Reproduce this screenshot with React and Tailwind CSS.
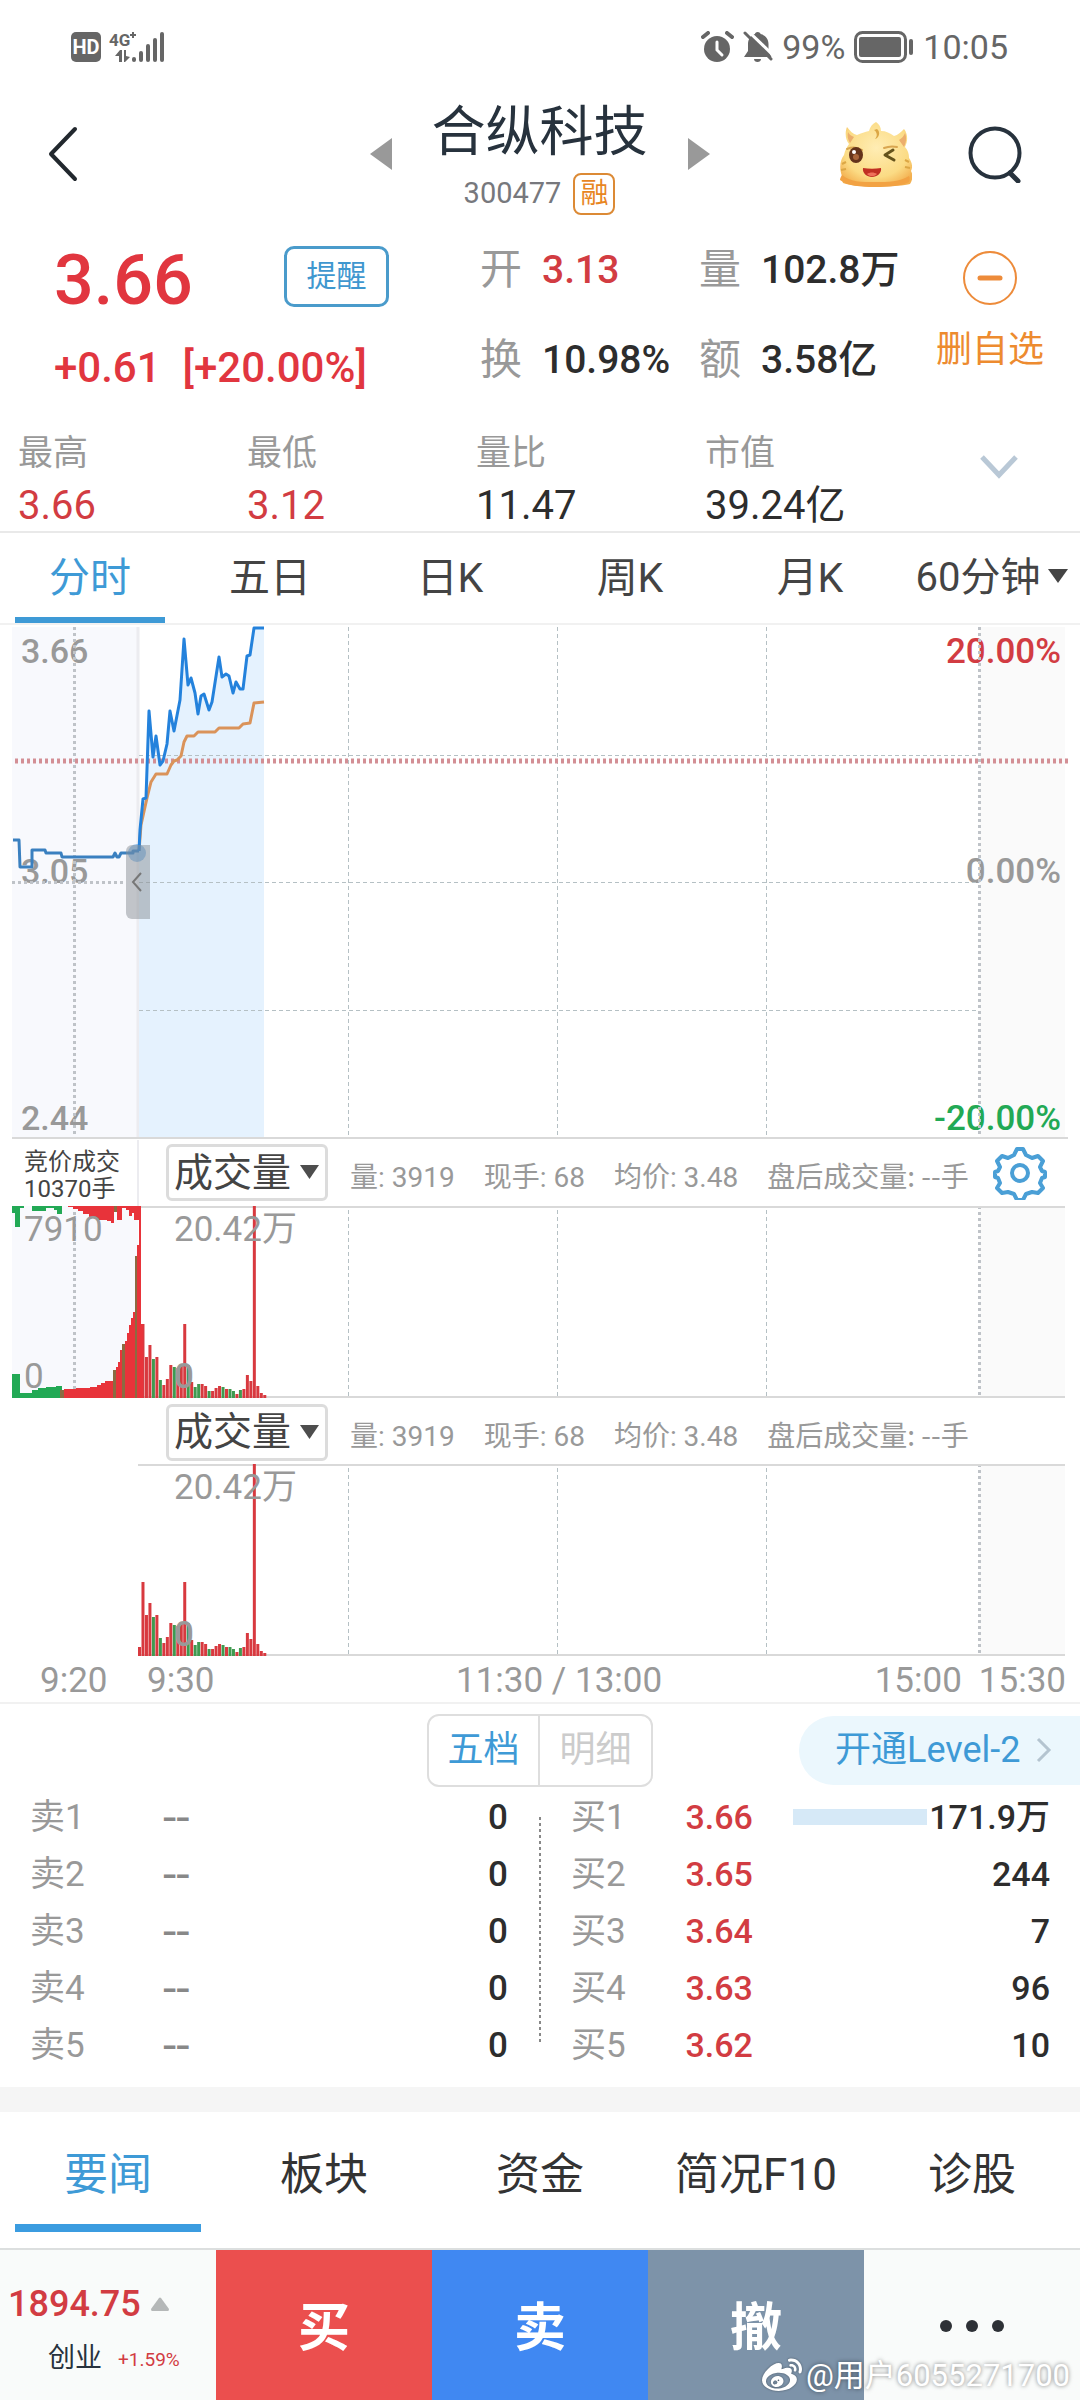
import { useState } from 'react';
import { FaWeibo } from 'react-icons/fa';

const STATS = [
  { label: '最高', value: '3.66', color: 'text-[#d23c42]' },
  { label: '最低', value: '3.12', color: 'text-[#d23c42]' },
  { label: '量比', value: '11.47', color: 'text-[#2d2d2d]' },
  { label: '市值', value: '39.24亿', color: 'text-[#2d2d2d]' },
];

const PERIODS = ['分时', '五日', '日K', '周K', '月K'];
const NEWS_TABS = ['要闻', '板块', '资金', '简况F10', '诊股'];

const VOLUME_INFO = ['量: 3919', '现手: 68', '均价: 3.48'];

const ORDERS = [
  { level: 1, bid: '3.66', amount: '171.9万', bar: true },
  { level: 2, bid: '3.65', amount: '244' },
  { level: 3, bid: '3.64', amount: '7' },
  { level: 4, bid: '3.63', amount: '96' },
  { level: 5, bid: '3.62', amount: '10' },
];

const AUCTION_LINE =
  '13,215 19,215 20,242 32,242 32,225 45,225 46,228 61,228 62,232 113,232 115,228 117,232 119,232 121,228 133,228 133,226 139,226';
const PRICE_LINE =
  '139,226 140,205 143,174 146,173 149,86 153,132 156,111 160,140 163,136 167,119 170,86 174,106 180,75 184,14 188,60 191,53 195,68 198,89 201,71 204,69 209,85 212,77 219,32 222,52 226,49 229,51 233,68 236,57 240,64 243,64 247,31 250,30 254,3 264,3';
const AVG_LINE =
  '139,226 141,200 147,173 151,157 156,149 167,149 171,140 174,136 177,135 181,131 184,117 187,111 194,111 198,107 215,107 219,103 239,103 243,99 250,98 254,78 264,77';

// one bar per minute since 9:30
const VOLUMES = [9, 74, 41, 53, 39, 41, 18, 13, 19, 33, 31, 30, 33, 74, 33, 16, 11, 14, 14, 12, 7, 7, 10, 12, 11, 9, 9, 7, 4, 8, 9, 23, 17, 192, 12, 5, 3];
const DOWN_MINUTES = [4, 6, 10, 14, 16, 17, 20, 24, 26, 27, 29];

// [x, width, height, color] for the call auction, matched volume from the bottom
const RED = '#e8333a';
const GREEN = '#22a955';
const OLIVE = '#8b6b41';
const AUCTION_BARS = [
  [12, 8, 24, GREEN], [20, 12, 5, GREEN], [32, 6, 8, GREEN], [38, 8, 10, GREEN], [46, 10, 11, GREEN], [56, 6, 12, GREEN],
  [60, 4, 8, OLIVE], [64, 12, 9, RED], [76, 14, 10, RED], [90, 7, 11, RED], [97, 4, 13, RED], [101, 4, 15, RED], [105, 8, 17, RED],
  [113, 3, 28, OLIVE], [116, 2, 31, RED], [118, 2, 36, RED], [120, 2, 48, RED], [122, 3, 54, OLIVE], [125, 2, 57, RED],
  [127, 2, 65, RED], [129, 2, 73, RED], [131, 2, 80, RED], [133, 2, 86, RED], [135, 2, 142, OLIVE], [137, 2, 153, RED], [139, 2, 192, RED],
  [141, 2, 74, RED],
];
// unmatched volume, hanging from the top
const UNMATCHED_BARS = [
  [12, 3, 7, GREEN], [15, 5, 21, GREEN], [20, 4, 2, GREEN], [32, 14, 5, GREEN], [46, 8, 2, GREEN], [54, 3, 4, GREEN], [57, 5, 8, GREEN],
  [68, 5, 1, RED], [73, 5, 3, RED], [78, 5, 5, RED], [83, 6, 8, RED], [89, 8, 11, RED], [97, 10, 14, RED], [107, 4, 15, RED], [111, 3, 17, RED],
  [114, 3, 6, OLIVE], [117, 5, 14, RED], [122, 4, 2, RED], [126, 3, 4, RED], [129, 3, 10, RED], [132, 2, 7, RED], [134, 6, 14, RED],
];

const StatusBar = () => (
  <div className="flex items-center justify-between pt-[31px] pb-[31px] pl-[71px] pr-[72px] text-[#666]">
    <div className="flex items-center gap-2">
      <span className="bg-[#666] text-white text-[20px] leading-[30px] font-bold rounded-[5px] w-[30px] text-center">HD</span>
      <div className="flex h-8 items-start">
        <div className="flex flex-col">
          <span className="text-[17px] leading-[18px] font-bold">4G</span>
          <svg className="ml-[6px]" width="16" height="14" viewBox="0 0 16 14" fill="#666">
            <path d="M0 7l5-6h2v12H4V7zM9 1h2v6l4 1-5 5H9z" />
          </svg>
        </div>
        <svg className="-ml-px" width="37" height="32" viewBox="0 0 37 32" fill="#666">
          <path d="M2 1h2v2h2v2H4v2H2V5H0V3h2z" />
          <rect x="2" y="26" width="4" height="5" rx="2" />
          <rect x="9" y="20" width="4" height="11" rx="2" />
          <rect x="16" y="13" width="4" height="18" rx="2" />
          <rect x="23" y="7" width="4" height="24" rx="2" />
          <rect x="30" y="1" width="4" height="30" rx="2" />
        </svg>
      </div>
    </div>
    <div className="flex items-center gap-[9px]">
      <svg width="33" height="32" viewBox="0 0 33 32">
        <circle cx="16" cy="18" r="13" fill="#666" />
        <path d="M2 6l5-4M31 6l-5-4" stroke="#666" strokeWidth="4" strokeLinecap="round" />
        <path d="M16 11v8l5 5" stroke="#fff" strokeWidth="3" fill="none" strokeLinecap="round" />
      </svg>
      <svg width="30" height="32" viewBox="0 0 30 32" fill="#666">
        <path d="M14.500 1c2 0 3 1 3 2 5 1 8 5 8 10v7l3 6H1l4-6v-7c0-5 3-9 7-10 0-1 1-2 2.500-2zM11 28h7c0 2-1.500 3-3.500 3S11 30 11 28z" />
        <path d="M3 -2l29 28" stroke="#fff" strokeWidth="3" />
        <path d="M2 2l26 26" stroke="#666" strokeWidth="3" strokeLinecap="round" />
      </svg>
      <span className="text-[34px] leading-[30px]">99%</span>
      <svg width="60" height="32" viewBox="0 0 60 32">
        <rect x="1.500" y="1.500" width="50" height="29" rx="7" fill="none" stroke="#666" strokeWidth="3" />
        <rect x="5" y="6" width="42" height="20" rx="2" fill="#666" />
        <rect x="55" y="8" width="4" height="16" rx="2" fill="#666" />
      </svg>
      <span className="text-[34px] leading-[30px]">10:05</span>
    </div>
  </div>
);

const Mascot = () => (
  <svg width="74" height="68" viewBox="0 0 74 68">
    <defs>
      <radialGradient id="face" cx="50%" cy="40%" r="65%">
        <stop offset="0%" stopColor="#ffedb4" />
        <stop offset="70%" stopColor="#fbdb84" />
        <stop offset="100%" stopColor="#f3b050" />
      </radialGradient>
    </defs>
    <path d="M4 56c-3-8-2-16 2-21 1-5 3-8 5-11-4-5-4-12-2-17 3 4 6 7 10 8 4-2 8-3 12-4 1-4 3-7 7-9 3 2 5 5 5 9 5 0 9 2 13 5 4-1 7-4 10-7 4 5 4 12 1 18 3 3 4 7 4 11 3 4 4 9 2 13 2 4 2 8-1 13-9 3-57 4-67-1-1-2-1-5-1-7z" fill="url(#face)" />
    <path d="M2 60c8 6 20 7 35 7s27-1 34-5c1-2 1-4 0-6-10 6-20 6-34 6S12 62 4 55c-1 2-2 3-2 5z" fill="#f2a243" />
    <path d="M67 13c2 5 1 10-1 14l-5-7c3-2 5-4 6-7zM10 12c-1 4 0 8 2 11l4-6c-3-1-5-3-6-5z" fill="#ecae6c" />
    <path d="M36 10c3 2 4 6 1 9 4-1 6-7 2-10z" fill="#dca745" />
    <path d="M9 29c5-2 10-2 15 1M46 28c5-2 9-2 13-1" stroke="#d9a650" strokeWidth="2" fill="none" strokeLinecap="round" />
    <path d="M4 44l4-2M3 50l5-1M71 42l-4-2M72 48l-5-1" stroke="#dca745" strokeWidth="2" />
    <ellipse cx="18" cy="35" rx="7" ry="8" fill="#64331b" />
    <circle cx="18" cy="37" r="3" fill="#a8643a" />
    <circle cx="16" cy="32" r="2" fill="#fff" />
    <path d="M55 30l-8 5 9 5" stroke="#64521b" strokeWidth="3" fill="none" strokeLinecap="round" strokeLinejoin="round" />
    <path d="M25 48c6 1 12 1 18 0 1 5-4 9-9 9s-10-4-9-9z" fill="#c03022" />
    <path d="M29 54c3-2 7-2 10 0-3 3-7 3-10 0z" fill="#f0705a" />
  </svg>
);

const Header = () => (
  <header className="grid grid-cols-[1fr_auto_1fr] items-center pt-[6px] pb-2 pl-12 pr-[58px]">
    <button aria-label="返回" className="justify-self-start pb-2">
      <svg width="30" height="56" viewBox="0 0 30 56" fill="none" stroke="#22282e" strokeWidth="4" strokeLinecap="round" strokeLinejoin="round">
        <path d="M27 3L3 28l24 25" />
      </svg>
    </button>
    <div className="flex items-center gap-10 pl-[9px]">
      <button aria-label="上一只" className="pb-2">
        <svg width="22" height="32" viewBox="0 0 22 32" fill="#999"><path d="M22 0v32L0 16z" /></svg>
      </button>
      <div className="flex flex-col items-center">
        <h1 className="text-[54px] leading-[66px] text-[#27323d]">合纵科技</h1>
        <div className="mt-[6px] flex items-center gap-3">
          <span className="text-[29px] text-[#77787d]">300477</span>
          <span className="h-[42px] w-[42px] rounded-lg border-2 border-[#dc8a35] text-center text-[28px] leading-[38px] text-[#e8861f]">融</span>
        </div>
      </div>
      <button aria-label="下一只" className="pb-2">
        <svg width="22" height="32" viewBox="0 0 22 32" fill="#999"><path d="M0 0v32l22-16z" /></svg>
      </button>
    </div>
    <div className="flex items-center gap-14 justify-self-end pb-2">
      <button aria-label="助手"><Mascot /></button>
      <button aria-label="搜索">
        <svg width="54" height="58" viewBox="0 0 54 58" fill="none" stroke="#27323d" strokeWidth="4" strokeLinecap="round">
          <circle cx="27" cy="28" r="24.500" />
          <path d="M42 48l8 8" strokeWidth="5" />
        </svg>
      </button>
    </div>
  </header>
);

const Pair = ({ label, value, color = 'text-[#2d2d2d]' }) => (
  <div className="flex items-center gap-5 whitespace-nowrap leading-[60px]">
    <dt className="text-[42px] text-[#999]">{label}</dt>
    <dd className={`text-[39px] font-medium ${color}`}>{value}</dd>
  </div>
);

const Quote = () => (
  <section className="border-b-2 border-[#e9e9e9] pb-px">
    <div className="grid grid-cols-[480fr_219fr_201fr_180fr] pt-4">
      <div className="pl-[54px] text-[#e1363f]">
        <div className="flex items-start">
          <span className="w-[230px] text-[70px] leading-[80px] font-medium">3.66</span>
          <button className="mt-[6px] h-[61px] w-[105px] rounded-[10px] border-[3px] border-[#4a9bcb] text-[30px] leading-none text-[#3f97cf]">提醒</button>
        </div>
        <div className="mt-6 flex gap-[22px] text-[42px] leading-[48px] font-medium">
          <span>+0.61</span>
          <span>[+20.00%]</span>
        </div>
      </div>
      <dl className="flex flex-col gap-[30px]">
        <Pair label="开" value="3.13" color="text-[#d23c42]" />
        <Pair label="换" value="10.98%" />
      </dl>
      <dl className="flex flex-col gap-[30px]">
        <Pair label="量" value="102.8万" />
        <Pair label="额" value="3.58亿" />
      </dl>
      <button className="flex flex-col items-center pt-[10px]">
        <svg width="56" height="56" viewBox="0 0 56 56" fill="none" stroke="#ed8b3a">
          <circle cx="28" cy="28" r="26" strokeWidth="2" />
          <path d="M18 28h20" strokeWidth="5" strokeLinecap="round" />
        </svg>
        <span className="mt-6 text-[36px] leading-[40px] text-[#ed8b2f]">删自选</span>
      </button>
    </div>
    <div className="mt-[42px] grid grid-cols-[917fr_163fr]">
      <dl className="grid grid-cols-[229fr_229fr_229fr_212fr] pl-[18px]">
        {STATS.map((s) => (
          <div key={s.label}>
            <dt className="text-[35px] leading-[40px] text-[#999]">{s.label}</dt>
            <dd className={`mt-2 text-[40px] leading-[48px] whitespace-nowrap ${s.color}`}>{s.value}</dd>
          </div>
        ))}
      </dl>
      <button aria-label="展开" className="flex justify-center pt-5">
        <svg width="40" height="26" viewBox="0 0 40 26" fill="none" stroke="#b9c8d6" strokeWidth="5">
          <path d="M3 3l17 18L37 3" />
        </svg>
      </button>
    </div>
  </section>
);

const PeriodTabs = () => {
  const [active, setActive] = useState('分时');
  return (
    <nav className="grid grid-cols-6 border-b-2 border-[#f1f1f1] text-[41px] leading-[56px] text-[#444]">
      {PERIODS.map((p) => (
        <button key={p} onClick={() => setActive(p)} className={`flex flex-col items-center pt-[17px] ${p === active ? 'text-[#3e9ad6]' : ''}`}>
          {p}
          <span className={`mt-[11px] h-[6px] w-[150px] ${p === active ? 'bg-[#3e9ad6]' : ''}`} />
        </button>
      ))}
      <div className="relative flex justify-center pt-[17px]">
        <select aria-label="分钟周期" className="h-[56px] appearance-none bg-transparent pr-6 text-[40px]">
          <option>60分钟</option>
        </select>
        <svg className="pointer-events-none absolute right-3 top-9" width="20" height="14" viewBox="0 0 20 14" fill="#444"><path d="M0 0h20L10 14z" /></svg>
      </div>
    </nav>
  );
};

const PriceChart = () => (
  <svg className="block h-auto w-full" viewBox="0 0 1080 515" fontSize="34" fill="none">
    <rect x="12" y="2" width="125" height="511" fill="#f8f9fd" />
    <rect x="980" y="2" width="85" height="511" fill="#fafafa" />
    <path d="M138 2v511" stroke="#ececf0" strokeWidth="3" />
    <polygon points={`${PRICE_LINE} 264,513 139,513`} fill="#e5f2fe" />

    <g fill="#999" fontWeight="500">
      <text x="21" y="38">3.66</text>
      <text x="21" y="258">3.05</text>
      <text x="21" y="505">2.44</text>
    </g>
    <g fontSize="35" fontWeight="500" textAnchor="end">
      <text x="1061" y="38" fill="#d23c42">20.00%</text>
      <text x="1061" y="258" fill="#999">0.00%</text>
      <text x="1061" y="505" fill="#22a955">-20.00%</text>
    </g>

    <g stroke="#b5c0c4" strokeDasharray="4 3">
      <path d="M348.500 2v511M557.500 2v511M766.500 2v511" />
      <path d="M139 130.500h840M139 257.500h840M139 385.500h840" />
    </g>
    <path d="M74.500 2v511M979.500 2v511M12 257.500h114" stroke="#bfc3c8" strokeWidth="3" strokeDasharray="3 3" />
    <path d="M15 136h1053" stroke="#d38f95" strokeWidth="5" strokeDasharray="3 3" />
    <path d="M12 513h1056" stroke="#d9d9d9" strokeWidth="2" />

    <g strokeWidth="3" strokeLinejoin="round">
      <polyline points={AVG_LINE} stroke="#da935a" />
      <polyline points={AUCTION_LINE} stroke="#3a80c0" />
      <polyline points={PRICE_LINE} stroke="#2482dc" />
    </g>
    <circle cx="137" cy="228" r="9" fill="#2482dc" fillOpacity="0.450" />
    <path d="M150 220v74h-18a6 6 0 0 1-6-6v-62a6 6 0 0 1 6-6z" fill="#8a8f96" fillOpacity="0.500" />
    <path d="M141 248l-8 9 8 9" stroke="#777" strokeWidth="2" />
  </svg>
);

const VolumeChart = ({ auction }) => (
  <svg className="block h-auto w-full" viewBox="0 0 1080 192" fontSize="35" fill="none">
    {auction && <rect x="12" y="0" width="126" height="192" fill="#f8f9fd" />}
    <rect x="980" y="0" width="85" height="192" fill="#fafafa" />
    <path d="M348.500 4v186M557.500 4v186M766.500 4v186" stroke="#b5c0c4" strokeDasharray="4 3" />
    <path d="M979.500 0v192" stroke="#bfc3c8" strokeWidth="3" strokeDasharray="3 3" />
    <path d="M138 1h927M138 191h927" stroke="#d9d9d9" strokeWidth="2" />
    {auction && <path d="M74.500 0v192" stroke="#bfc3c8" strokeWidth="3" strokeDasharray="3 3" />}
    {VOLUMES.map((h, i) => (
      <rect key={i} x={138 + i * 3.48} y={192 - h} width="3" height={h} fill={DOWN_MINUTES.includes(i) ? '#3f9a50' : '#d8393f'} />
    ))}
    {auction && AUCTION_BARS.map(([x, w, h, c]) => <rect key={x} x={x} y={192 - h} width={w} height={h} fill={c} />)}
    {auction && UNMATCHED_BARS.map(([x, w, h, c]) => <rect key={x} x={x} y="0" width={w} height={h} fill={c} />)}
    <g fill="#999">
      {auction && <text x="24" y="35">7910</text>}
      {auction && <text x="24" y="182">0</text>}
      <text x="174" y="35">20.42万</text>
      <text x="174" y="182" fontWeight="500">0</text>
    </g>
  </svg>
);

const VolumeHeader = ({ auction, id }) => (
  <div className={`flex h-[66px] items-center ${auction ? '' : 'pt-[3px]'}`}>
    <div className={`h-full w-[139px] shrink-0 pl-6 pt-[9px] text-[24px] leading-[27px] text-[#444] ${auction ? 'border-r-2 border-[#ececf0]' : ''}`}>
      {auction && <p>竞价成交<br />10370手</p>}
    </div>
    <div className="relative ml-[27px] shrink-0">
      <select id={id} aria-label="指标" className="block h-[57px] w-[162px] appearance-none rounded-md border-[3px] border-[#dcdcdc] bg-white pl-[5px] text-[39px] leading-[50px] text-[#444]">
        <option>成交量</option>
      </select>
      <svg className="pointer-events-none absolute right-[9px] top-[21px]" width="19" height="14" viewBox="0 0 19 14" fill="#4d4d4d"><path d="M0 0h19l-9.500 14z" /></svg>
    </div>
    <div className="ml-[22px] flex items-baseline gap-[29px] whitespace-nowrap pt-[7px] text-[28px] leading-[42px] text-[#999]">
      {VOLUME_INFO.map((t) => <span key={t}>{t}</span>)}
      <span className="font-['Noto_Sans_CJK_SC',sans-serif]">盘后成交量: --手</span>
    </div>
    {auction && (
      <button aria-label="设置" className="ml-auto mr-[33px]">
        <svg width="54" height="54" viewBox="0 0 54 54" fill="none" stroke="#4a9fd6" strokeWidth="4" strokeLinejoin="round">
          <path d="M24 3h6l3 6 6 3 6-2 5 5-3 6 2 4 3 1v5l-3 1-2 5 3 5-5 5-6-1-6 2-3 6h-6l-3-6-6-2-6 1-5-5 3-5-2-5-3-1v-5l3-1 2-4-3-6 5-5 6 2 6-3z" />
          <circle cx="27" cy="27" r="8" />
        </svg>
      </button>
    )}
  </div>
);

const TimeAxis = () => (
  <div className="grid grid-cols-[139fr_225fr_370fr_346fr] border-b-2 border-[#f1f1f1] pt-1 text-[35px] leading-[42px] text-[#999]">
    <span className="pl-10">9:20</span>
    <span className="pl-2">9:30</span>
    <span className="pl-[92px] whitespace-nowrap">11:30 / 13:00</span>
    <span className="flex justify-end gap-[17px] pr-[14px]"><span>15:00</span><span>15:30</span></span>
  </div>
);

const OrderBook = () => (
  <section>
    <div className="grid grid-cols-[1fr_auto_1fr] items-center pt-[10px]">
      <div className="col-start-2 flex overflow-hidden rounded-xl border-2 border-[#dedede] text-[36px] leading-[69px]">
        <button className="w-[111px] border-r-2 border-[#dedede] text-[#3e9ad6]">五档</button>
        <button className="w-[111px] text-[#ccc]">明细</button>
      </div>
      <a href="#level2" className="flex w-[281px] items-center justify-between justify-self-end rounded-l-full bg-[#ebf7fd] pl-9 pr-7 text-[36px] leading-[69px] whitespace-nowrap text-[#3e9ad6]">
        开通Level-2
        <svg width="16" height="26" viewBox="0 0 16 26" fill="none" stroke="#b4c4d0" strokeWidth="3"><path d="M2 2l11 11L2 24" /></svg>
      </a>
    </div>
    <div className="relative mt-[2px]">
      <table className="w-full table-fixed text-[35px] leading-[57px] text-[#2d2d2d]">
        <colgroup>
          <col className="w-[15%]" />
          <col className="w-[15%]" />
          <col className="w-[20%]" />
          <col className="w-[13%]" />
          <col className="w-[10%]" />
          <col className="w-[27%]" />
        </colgroup>
        <tbody>
          {ORDERS.map((o) => (
            <tr key={o.level}>
              <td className="pl-[30px] text-[#999]">卖{o.level}</td>
              <td className="pl-px text-[48px] text-[#888]">--</td>
              <td className="pr-8 text-right font-medium">0</td>
              <td className="pl-[31px] text-[#999]">买{o.level}</td>
              <td className="text-[34px] font-medium text-[#d23c42]"><span className="pl-[5px]">{o.bid}</span></td>
              <td className="pr-[30px] font-medium">
                <span className="flex items-center justify-end gap-[2px]">
                  {o.bar && <span className="h-4 w-[134px] bg-[#d6e9f7]" />}
                  <span className="text-[34px]">{o.amount}</span>
                </span>
              </td>
            </tr>
          ))}
        </tbody>
      </table>
      <svg className="absolute left-1/2 top-7 -translate-x-1/2" width="2" height="226" viewBox="0 0 2 226"><path d="M1 0v226" stroke="#888" strokeWidth="2" strokeDasharray="3 3" /></svg>
    </div>
  </section>
);

const NewsTabs = () => {
  const [active, setActive] = useState('要闻');
  return (
    <nav className="mt-[13px] grid grid-cols-5 border-t-[25px] border-[#f5f5f5] pb-4 text-[44px] leading-[64px] text-[#333]">
      {NEWS_TABS.map((t) => (
        <button key={t} onClick={() => setActive(t)} className={`flex flex-col items-center pt-[31px] ${t === active ? 'text-[#3e9ad6]' : ''}`}>
          {t}
          <span className={`mt-[17px] h-2 w-[186px] ${t === active ? 'bg-[#3b9ce0]' : ''}`} />
        </button>
      ))}
    </nav>
  );
};

const TradeBar = () => (
  <footer className="relative grid grid-cols-5 border-t-2 border-[#dcdfdf] bg-[#f9fbfa] text-[52px] font-bold text-white">
    <div className="pt-8 pb-[26px] pl-2 font-normal">
      <div className="flex items-center gap-[10px] text-[36px] leading-[44px] font-medium text-[#d23c42]">
        1894.75
        <svg width="18" height="14" viewBox="0 0 18 14" fill="#b5b8b8"><path d="M8 1q1-1 2 0l8 11q0 2-1 2H1q-1 0-1-2z" /></svg>
      </div>
      <div className="mt-[14px] flex items-center gap-4 pl-10">
        <span className="text-[27px] leading-[36px] text-[#27323d]">创业</span>
        <span className="pt-1 text-[19px] leading-[32px] text-[#d23c42]">+1.59%</span>
      </div>
    </div>
    <button className="bg-[#eb4f4e] pt-[6px]">买</button>
    <button className="bg-[#4088f2] pt-[6px]">卖</button>
    <button className="bg-[#7d93a9] pt-[6px]">撤</button>
    <button aria-label="更多" className="flex items-center justify-center gap-[14px]">
      <span className="h-3 w-3 rounded-full bg-[#2e3136]" />
      <span className="h-3 w-3 rounded-full bg-[#2e3136]" />
      <span className="h-3 w-3 rounded-full bg-[#2e3136]" />
    </button>
    <div className="absolute right-[10px] bottom-[6px] flex items-center gap-1 text-[31px] leading-[40px] font-normal whitespace-nowrap text-white [text-shadow:0_0_4px_rgba(0,0,0,0.5)]">
      <FaWeibo size={40} className="drop-shadow-[0_0_1px_rgba(0,0,0,0.4)]" />
      @用户6055271700
    </div>
  </footer>
);

export default function App() {
  return (
    <div className="min-h-screen bg-white font-[Roboto,'Noto_Sans_CJK_SC',sans-serif]">
      <StatusBar />
      <Header />
      <Quote />
      <PeriodTabs />
      <PriceChart />
      <VolumeHeader auction id="indicator-1" />
      <VolumeChart auction />
      <VolumeHeader id="indicator-2" />
      <VolumeChart />
      <TimeAxis />
      <OrderBook />
      <NewsTabs />
      <TradeBar />
    </div>
  );
}
